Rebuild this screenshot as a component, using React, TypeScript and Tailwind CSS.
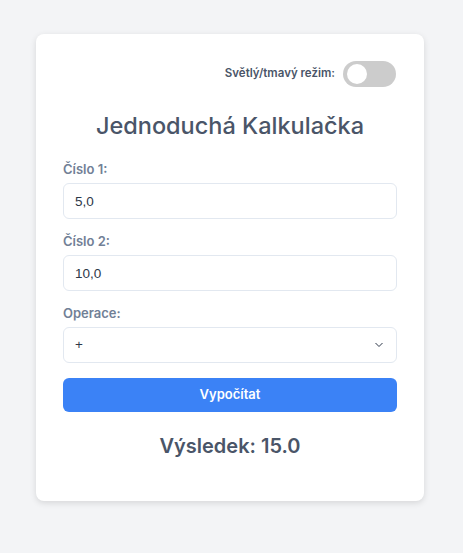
import { useState } from 'react'

export default function App() {
  const [a, setA] = useState('5,0')
  const [b, setB] = useState('10,0')
  const [op, setOp] = useState('+')
  const [dark, setDark] = useState(false)

  return (
    <div className="min-h-[553px] bg-[#f3f4f6] pt-[34px] font-['Inter',sans-serif]">
      <div className="ml-[36px] w-[388px] rounded-lg bg-white px-[27px] pt-[27px] pb-[42px] shadow-[0_2px_6px_rgba(0,0,0,0.12)]">
        {/* Theme toggle */}
        <div className="flex items-center justify-end gap-[8px]">
          <span className="text-[11.5px] font-semibold text-[#4a5568]">Světlý/tmavý režim:</span>
          <button
            onClick={() => setDark(!dark)}
            className="relative mr-[1px] h-[26px] w-[53px] rounded-full bg-[#cccccc]"
          >
            <span className="absolute left-[4px] top-[3px] h-[20px] w-[20px] rounded-full bg-white" />
          </button>
        </div>

        <h1 className="mt-[24px] text-center text-[23.5px] leading-[30px] font-medium text-[#4a5568]">
          Jednoduchá Kalkulačka
        </h1>

        <div className="mt-[19px]">
          <label className="block text-[13px] leading-[18px] font-semibold text-[#718096]">Číslo 1:</label>
          <input
            value={a}
            onChange={(e) => setA(e.target.value)}
            className="mt-[5px] block h-[36px] w-full rounded-md border border-[#e2e8f0] px-[11px] text-[13.5px] text-[#2d3748] font-['Liberation_Sans',sans-serif] outline-none"
          />
        </div>

        <div className="mt-[13px]">
          <label className="block text-[13px] leading-[18px] font-semibold text-[#718096]">Číslo 2:</label>
          <input
            value={b}
            onChange={(e) => setB(e.target.value)}
            className="mt-[5px] block h-[36px] w-full rounded-md border border-[#e2e8f0] px-[11px] text-[13.5px] text-[#2d3748] font-['Liberation_Sans',sans-serif] outline-none"
          />
        </div>

        <div className="mt-[13px]">
          <label className="block text-[13px] leading-[18px] font-semibold text-[#718096]">Operace:</label>
          <div className="relative mt-[5px]">
            <select
              value={op}
              onChange={(e) => setOp(e.target.value)}
              className="block h-[36px] w-full appearance-none rounded-md border border-[#e2e8f0] bg-white px-[11px] text-[13.5px] text-[#2d3748] font-['Liberation_Sans',sans-serif] outline-none"
            >
              <option value="+">+</option>
              <option value="-">-</option>
              <option value="*">*</option>
              <option value="/">/</option>
            </select>
            <svg
              className="pointer-events-none absolute right-[14px] top-1/2 -translate-y-1/2"
              width="8"
              height="5"
              viewBox="0 0 8 5"
              fill="none"
              stroke="#2d3748"
              strokeWidth="1"
            >
              <path d="M0.5 0.5 L4 4 L7.5 0.5" />
            </svg>
          </div>
        </div>

        <button className="mt-[15px] block h-[34px] w-full rounded-md bg-[#3b82f6] text-[13px] font-semibold text-white">
          Vypočítat
        </button>

        <p className="mt-[21px] text-center text-[20px] leading-[26px] font-semibold text-[#4a5568]">
          Výsledek: 15.0
        </p>
      </div>
    </div>
  )
}
